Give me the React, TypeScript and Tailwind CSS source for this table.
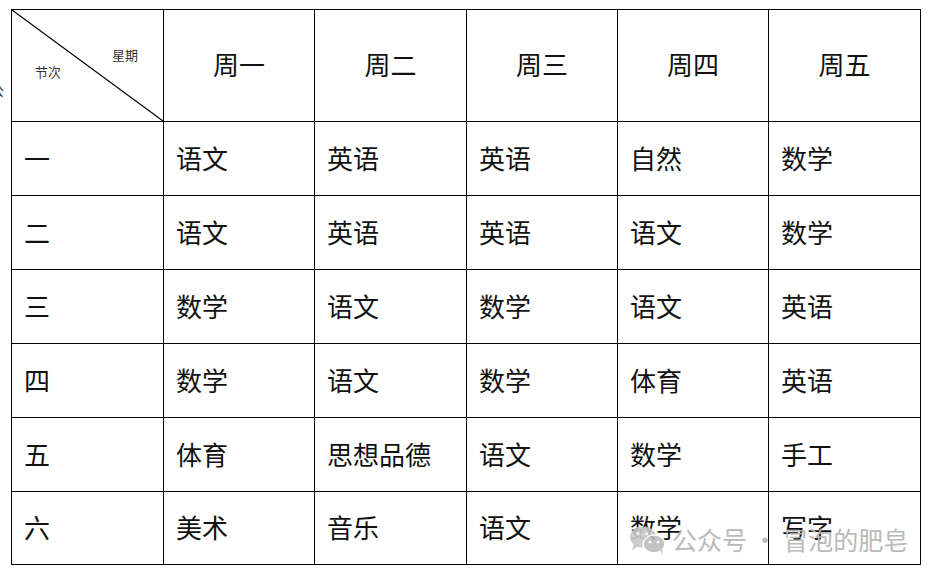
const days = ["周一", "周二", "周三", "周四", "周五"];

const rows = [
  { label: "一", subjects: ["语文", "英语", "英语", "自然", "数学"] },
  { label: "二", subjects: ["语文", "英语", "英语", "语文", "数学"] },
  { label: "三", subjects: ["数学", "语文", "数学", "语文", "英语"] },
  { label: "四", subjects: ["数学", "语文", "数学", "体育", "英语"] },
  { label: "五", subjects: ["体育", "思想品德", "语文", "数学", "手工"] },
  { label: "六", subjects: ["美术", "音乐", "语文", "数学", "写字"] },
];

const font = "font-['Noto_Sans_CJK_SC','Noto_Sans',sans-serif]";

function WeChatIcon() {
  return (
    <svg width="40" height="30" viewBox="0 0 40 30">
      <ellipse cx="15" cy="12" rx="13" ry="10.5" fill="#c8c8c8" />
      <path d="M6 19 L4 25 L11 21 Z" fill="#c8c8c8" />
      <ellipse cx="26" cy="19" rx="11" ry="9" fill="#bdbdbd" stroke="#fff" strokeWidth="1.5" />
      <path d="M32 26 L35 29 L34 24 Z" fill="#bdbdbd" />
      <circle cx="10" cy="9" r="1.6" fill="#fff" />
      <circle cx="19" cy="9" r="1.6" fill="#fff" />
      <circle cx="22" cy="17" r="1.4" fill="#fff" />
      <circle cx="30" cy="17" r="1.4" fill="#fff" />
    </svg>
  );
}

export default function App() {
  return (
    <div className={`relative w-[934px] h-[576px] bg-white overflow-hidden ${font}`}>
      <span className="absolute left-[-10px] top-[80px] text-[14px] text-gray-700">公</span>
      <div className="pl-[11px] pt-[9px]">
        <div className="grid grid-cols-[152px_151px_152px_151px_151px_152px] grid-rows-[112px_74px_74px_74px_74px_74px_73px] w-fit border-l border-t border-black">
          <div className="relative border-r border-b border-black">
            <svg className="absolute inset-0" width="151" height="111">
              <line x1="0" y1="0" x2="151" y2="111" stroke="#000" strokeWidth="1.2" />
            </svg>
            <span className="absolute left-[100px] top-[35px] text-[13px] text-[#333]">星期</span>
            <span className="absolute left-[23px] top-[52px] text-[13px] text-[#333]">节次</span>
          </div>
          {days.map((d) => (
            <div key={d} className="flex items-center justify-center pb-[4px] border-r border-b border-black text-[26px] text-[#111]">
              {d}
            </div>
          ))}
          {rows.map((row) => (
            <>
              <div key={row.label} className="flex items-center pl-[12px] pb-[3px] border-r border-b border-black text-[26px] text-[#111]">
                {row.label}
              </div>
              {row.subjects.map((s, i) => (
                <div key={row.label + i} className="flex items-center pl-[12px] pb-[3px] border-r border-b border-black text-[26px] text-[#111]">
                  {s}
                </div>
              ))}
            </>
          ))}
        </div>
      </div>
      <div className="absolute left-[628px] top-[521px] flex items-center gap-[4px] text-[25px] text-[#b3b3b3] opacity-90">
        <WeChatIcon />
        <span>公众号 · 冒泡的肥皂</span>
      </div>
    </div>
  );
}
